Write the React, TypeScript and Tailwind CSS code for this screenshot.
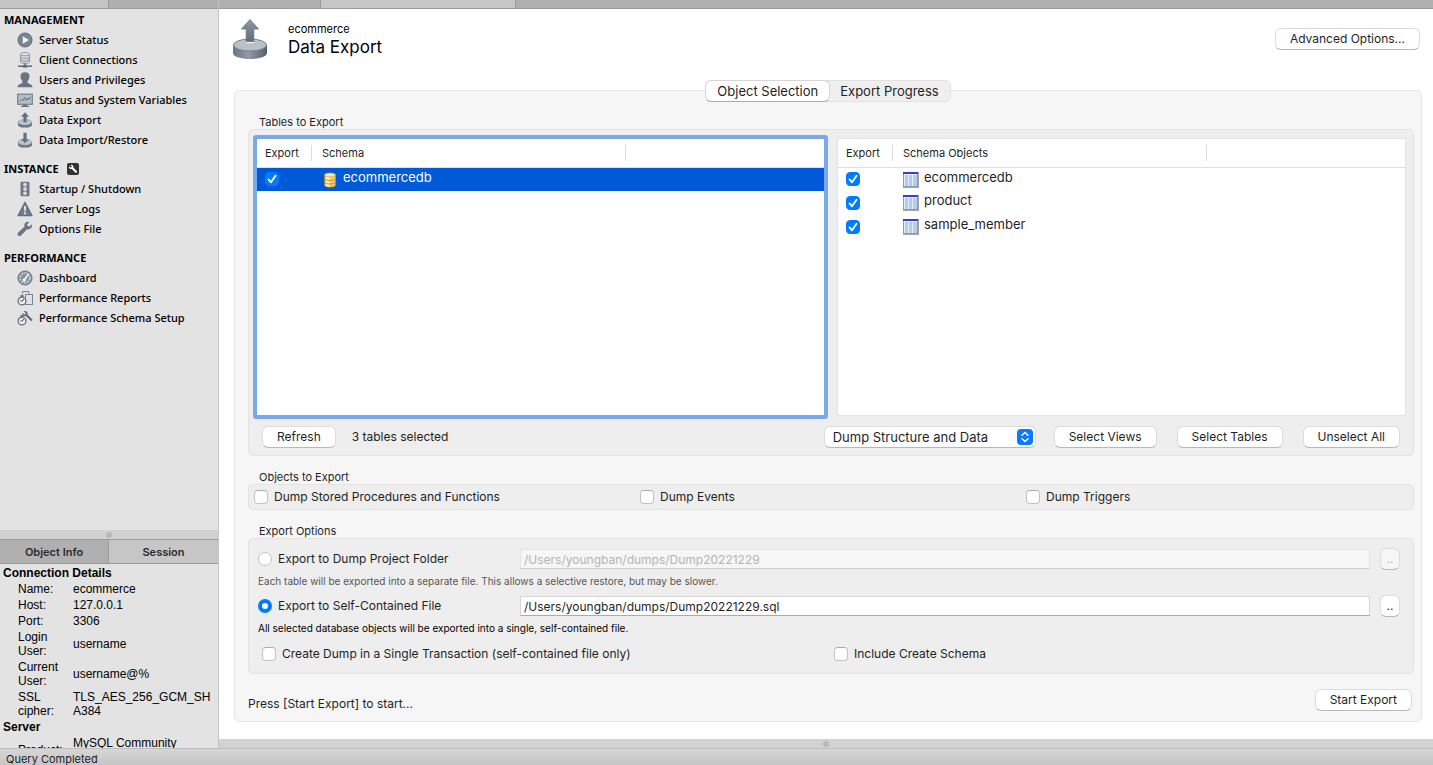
import type { ReactNode } from "react";

const Icon = ({ children }: { children: ReactNode }) => (
  <svg width="16" height="16" viewBox="0 0 16 16" className="shrink-0">
    {children}
  </svg>
);

const Disk = ({ up }: { up: boolean }) => (
  <Icon>
    <path d="M1 10.300v2.400c0 1.700 3.100 2.900 7 2.900s7-1.200 7-2.900v-2.400z" fill="#66707e" />
    <ellipse cx="8" cy="10.300" rx="6.800" ry="2.900" fill="#bcc4cd" stroke="#8c95a2" strokeWidth=".6" />
    {up ? (
      <path d="M8 .3l4 4.400H9.600v5.600H6.400V4.700H4z" fill="#647080" />
    ) : (
      <path d="M8 11.200L4 7h2.400V.8h3.200V7H12z" fill="#647080" />
    )}
  </Icon>
);

const wrench =
  "M14.800 3.200l-2.300 2.300-1.900-.4-.5-1.900L12.400.9C10.700.3 8.800.8 7.900 2.300c-.7 1.100-.7 2.300-.3 3.300L1.200 11.600c-.9.900-.9 2.100-.1 2.900s2.100.8 2.900-.1L10.100 8.200c1.100.4 2.500.2 3.500-.6 1.400-1.100 1.800-2.900 1.200-4.400z";

const Stopwatch = () => (
  <>
    <rect x="3.500" y="5" width="3" height="2" fill="#66707e" />
    <circle cx="5" cy="11" r="3.900" fill="#eef1f4" stroke="#66707e" strokeWidth="1.300" />
    <path d="M5 11l2-2M5 11H3" stroke="#66707e" strokeWidth="1.200" />
  </>
);

const management = [
  {
    label: "Server Status",
    icon: (
      <Icon>
        <circle cx="8" cy="8" r="7" fill="#7a8593" stroke="#5f6a78" />
        <path d="M5.800 4.200v7.600L12 8z" fill="#f1f3f5" />
      </Icon>
    ),
  },
  {
    label: "Client Connections",
    icon: (
      <Icon>
        <path d="M3.500 2.200v7.600c0 .9 2 1.600 4.500 1.600s4.500-.7 4.500-1.600V2.200z" fill="#d3d9e0" stroke="#8d96a3" />
        <ellipse cx="8" cy="2.200" rx="4.500" ry="1.600" fill="#e9ecef" stroke="#8d96a3" />
        <path d="M3.500 5c0 .9 2 1.500 4.500 1.500S12.500 5.900 12.500 5M3.500 7.600c0 .9 2 1.500 4.500 1.500s4.500-.6 4.500-1.500" fill="none" stroke="#8d96a3" />
        <path d="M8 11.500V14M1 14.200h14" stroke="#5f6a78" strokeWidth="1.500" />
        <rect x="6" y="13" width="4" height="2.600" fill="#5f6a78" />
      </Icon>
    ),
  },
  {
    label: "Users and Privileges",
    icon: (
      <Icon>
        <path d="M8 .3c3 0 4.500 1.500 4.500 4 0 2-.8 3.600-1.900 4.800-.3 1.400.2 2.200 1.600 2.600 1.800.5 3.300 1.300 3.300 3.600H.5c0-2.300 1.500-3.100 3.300-3.600 1.400-.4 1.900-1.200 1.600-2.600C4.300 7.900 3.500 6.300 3.500 4.300c0-2.500 1.500-4 4.500-4z" fill="#687482" />
      </Icon>
    ),
  },
  {
    label: "Status and System Variables",
    icon: (
      <Icon>
        <rect x=".7" y="2.200" width="14.600" height="10.100" fill="#b5bfca" stroke="#7b8593" strokeWidth="1.300" />
        <path d="M2.500 9.500l2-2 1.300 1.300L7.500 5.500l1.500 3 1.500-2.500 1 2L13.500 5" fill="none" stroke="#66717f" />
        <path d="M6 12.500h4v1.200h2V15H4v-1.300h2z" fill="#687382" />
      </Icon>
    ),
  },
  { label: "Data Export", icon: <Disk up={true} /> },
  { label: "Data Import/Restore", icon: <Disk up={false} /> },
];

const instance = [
  {
    label: "Startup / Shutdown",
    icon: (
      <Icon>
        <rect x="3.500" y=".8" width="9" height="14.400" rx="1" fill="#6f7a88" />
        <circle cx="8" cy="3.700" r="1.900" fill="#d5dae0" />
        <circle cx="8" cy="8" r="1.900" fill="#d5dae0" />
        <circle cx="8" cy="12.300" r="1.900" fill="#d5dae0" />
      </Icon>
    ),
  },
  {
    label: "Server Logs",
    icon: (
      <Icon>
        <path d="M8 1.200L15 14.600H1z" fill="#6f7a88" stroke="#66707e" strokeWidth="1.200" strokeLinejoin="round" />
        <path d="M7 5.200h2L8.600 10.500H7.400zM7.100 11.500h1.800v1.800H7.100z" fill="#f4f5f6" />
      </Icon>
    ),
  },
  {
    label: "Options File",
    icon: (
      <Icon>
        <path d={wrench} fill="#6a7584" />
      </Icon>
    ),
  },
];

const performance = [
  {
    label: "Dashboard",
    icon: (
      <Icon>
        <circle cx="8" cy="8" r="7" fill="#8791a0" stroke="#66707e" />
        <circle cx="8" cy="8" r="5" fill="none" stroke="#d3d8de" strokeWidth="1.500" strokeDasharray="2 1.200" />
        <path d="M7 10.500L11.500 4" stroke="#f4f5f6" strokeWidth="1.600" />
        <circle cx="7.300" cy="10" r="1.800" fill="#f4f5f6" />
      </Icon>
    ),
  },
  {
    label: "Performance Reports",
    icon: (
      <Icon>
        <path d="M5.500 4V1.500H12V4" fill="#dfe3e8" stroke="#7b8593" />
        <rect x="8.500" y="4.500" width="7" height="10" fill="#dfe3e8" stroke="#7b8593" />
        <Stopwatch />
      </Icon>
    ),
  },
  {
    label: "Performance Schema Setup",
    icon: (
      <Icon>
        <path d="M6.500 1.500c1-.8 2.500-.7 3.400.2.800.8 1 1.900.6 2.900l4.500 4.300c.6.600.5 1.300 0 1.700-.5.500-1.200.4-1.700-.1L9 6.100c-1 .4-2.100.1-2.900-.6-.7-.7-1-1.700-.7-2.700L7.200 4.500l1.300-.3.200-1.200z" fill="#5f6a78" />
        <Stopwatch />
      </Icon>
    ),
  },
];

type Item = { label: string; icon: ReactNode };

const NavGroup = ({ title, items, badge }: { title: string; items: Item[]; badge?: ReactNode }) => (
  <section className="mb-[9px]">
    <h2 className="flex h-5 items-center gap-2 pl-1 text-[11px] font-bold">
      {title}
      {badge}
    </h2>
    <ul>
      {items.map((item) => (
        <li key={item.label}>
          <a href="#" className="flex h-5 items-center gap-[6px] pl-[17px] text-[11px] font-medium">
            {item.icon}
            {item.label}
          </a>
        </li>
      ))}
    </ul>
  </section>
);

const details = [
  ["Name:", "ecommerce"],
  ["Host:", "127.0.0.1"],
  ["Port:", "3306"],
  ["Login User:", "username"],
  ["Current User:", "username@%"],
  ["SSL cipher:", "TLS_AES_256_GCM_SHA384"],
];

const Sidebar = () => (
  <aside className="flex w-[219px] shrink-0 flex-col border-r border-[#c4c4c4] bg-[#e3e3e3] text-black">
    <div className="flex h-[9px] shrink-0 border-b border-[#9b9b9b]">
      <div className="w-1/2 border-r border-[#9b9b9b] bg-[#c5c5c5]" />
      <div className="w-1/2 bg-[#afafaf]" />
    </div>
    <nav className="min-h-0 flex-1 overflow-hidden pt-px font-['Noto_Sans',sans-serif]">
      <NavGroup title="MANAGEMENT" items={management} />
      <NavGroup
        title="INSTANCE"
        items={instance}
        badge={
          <svg width="12" height="12" viewBox="0 0 12 12">
            <rect width="12" height="12" rx="2" fill="#333" />
            <path d="M2 3.200L3.500 4.500l1-.2.200-1L3.500 2C5 1.300 6.800 2.500 6.300 4.500l3.500 3.600c.9 1-.5 2.300-1.500 1.400L4.800 6C3 6.500 1.500 5 2 3.200z" fill="#fff" />
          </svg>
        }
      />
      <NavGroup title="PERFORMANCE" items={performance} />
    </nav>
    <div className="flex h-[9px] shrink-0 items-center justify-center bg-[#d2d2d2]">
      <span className="size-[6px] rounded-full bg-[#b9b9b9]" />
    </div>
    <div className="flex h-[25px] shrink-0 border-y border-[#9b9b9b] font-['Inter',sans-serif] text-[11px] font-semibold text-[#2b2b2b]">
      <button className="w-1/2 border-r border-[#9b9b9b] bg-[#b0b0b0]">Object Info</button>
      <button className="w-1/2 bg-[#c6c6c6]">Session</button>
    </div>
    <div className="h-[184px] shrink-0 overflow-hidden font-['Liberation_Sans',Arial,sans-serif] text-[12px] leading-[14px]">
      <table className="w-full table-fixed border-separate border-spacing-x-0 border-spacing-y-[2px] text-left">
        <colgroup>
          <col className="w-[73px]" />
          <col />
        </colgroup>
        <tbody>
          <tr>
            <th colSpan={2} className="p-0 pl-[3px] font-bold">Connection Details</th>
          </tr>
          {details.map(([name, value]) => (
            <tr key={name}>
              <td className="p-0 pr-2 pl-[18px]">{name}</td>
              <td className="p-0 pr-1 break-all">{value}</td>
            </tr>
          ))}
          <tr>
            <th colSpan={2} className="p-0 pl-[3px] font-bold">Server</th>
          </tr>
          <tr className="h-7">
            <td className="p-0 pl-[18px]">Product:</td>
            <td className="p-0 align-top">MySQL Community</td>
          </tr>
        </tbody>
      </table>
    </div>
  </aside>
);

const buttonClass =
  "flex h-[22px] items-center justify-center rounded-md border border-[#dcdcdc] border-b-[#b8b8b8] bg-white";

const checkClass =
  "size-[14px] shrink-0 appearance-none rounded-[4px] border border-[#c2c2c2] border-t-[#acacac] bg-white";

const Checked = ({ label }: { label: string }) => (
  <span className="relative block size-[14px]">
    <input
      type="checkbox"
      defaultChecked
      aria-label={label}
      className="peer block size-[14px] appearance-none rounded-[4px] border border-[#c2c2c2] bg-white checked:border-[#007aff] checked:bg-[#007aff]"
    />
    <svg viewBox="0 0 14 14" className="pointer-events-none absolute inset-0 hidden size-[14px] peer-checked:block">
      <path d="M3.500 7.400l2.500 2.900L10.500 3.800" fill="none" stroke="#fff" strokeWidth="1.900" strokeLinecap="round" strokeLinejoin="round" />
    </svg>
  </span>
);

const Check = ({ label }: { label: string }) => (
  <label className="flex items-center gap-[6px]">
    <input type="checkbox" className={checkClass} />
    {label}
  </label>
);

const SchemaIcon = () => (
  <svg width="16" height="16" viewBox="0 0 16 16">
    <path d="M2.500 3v10.200c0 1.200 2.300 2 5.500 2s5.500-.8 5.500-2V3z" fill="#f3cd6b" stroke="#b98a2c" strokeWidth=".7" />
    <path d="M4 4v10c1 .5 2 .7 3.500.8V5z" fill="#fff2bd" />
    <ellipse cx="8" cy="2.900" rx="5.500" ry="2" fill="#fbe9a8" stroke="#c99a3b" strokeWidth=".6" />
    <path d="M2.500 6.500c0 1.100 2.300 2 5.500 2s5.500-.9 5.500-2M2.500 10c0 1.100 2.300 2 5.500 2s5.500-.9 5.500-2" fill="none" stroke="#b98a2c" strokeWidth=".9" />
  </svg>
);

const TableIcon = () => (
  <svg width="16" height="16" viewBox="0 0 16 16">
    <rect width="16" height="16" fill="#a3a5a8" />
    <rect width="15" height="15" fill="#7f9fcb" />
    <rect x="1" y="2" width="13" height="12" fill="#e6f0fb" />
    <rect width="15" height="2" fill="#3a3fc8" />
    <path d="M2 3h3v11H2zM6 3h3v11H6zM10 3h4v11h-4z" fill="#b4cdee" />
  </svg>
);

type ListProps = { column: string; rows: string[]; selected?: boolean; icon: ReactNode };

const ObjectList = ({ column, rows, selected, icon }: ListProps) => (
  <div
    className={
      selected
        ? "h-[284px] min-w-0 flex-1 rounded-[3px] border-4 border-[#7aa7ee] bg-white"
        : "my-[3px] mr-[3px] h-[278px] min-w-0 flex-1 border border-[#e2e2e2] bg-white"
    }
  >
    <table className="w-full table-fixed border-collapse text-left">
      <colgroup>
        <col className="w-[54px]" />
        <col className="w-[315px]" />
        <col />
      </colgroup>
      <thead>
        <tr className="h-7 border-b border-[#dedede] text-[11px]">
          <th className="p-0 pl-2 font-normal">Export</th>
          <th className="p-0 font-normal">
            <div className="flex h-4 items-center border-x border-[#dcdcdc] pl-[10px]">{column}</div>
          </th>
          <th />
        </tr>
      </thead>
      <tbody>
        {rows.map((row) => (
          <tr key={row} className={selected ? "h-6 bg-[#0059d6] text-white" : "h-6"}>
            <td className="p-0 pl-2">
              <Checked label={row} />
            </td>
            <td colSpan={2} className="p-0 align-top">
              <div className="flex gap-[5px] pl-[11px] text-[13px]">
                <span className="h-5 pt-1">{icon}</span>
                <span className="leading-[18px]">{row}</span>
              </div>
            </td>
          </tr>
        ))}
      </tbody>
    </table>
  </div>
);

const Group = ({ title, children }: { title: string; children: ReactNode }) => (
  <fieldset className="block min-w-0">
    <legend className="h-[14px] pl-[11px] text-[11px] leading-[14px]">{title}</legend>
    <div className="rounded-[5px] border border-[#e3e3e3] bg-[#eeeeee]">{children}</div>
  </fieldset>
);

const Path = ({ value, disabled }: { value: string; disabled?: boolean }) => (
  <>
    <input
      type="text"
      aria-label="Export path"
      defaultValue={value}
      disabled={disabled}
      className="h-5 min-w-0 flex-1 border border-[#d6d6d6] border-b-[#ababab] bg-white px-[3px] disabled:border-[#e4e4e4] disabled:border-b-[#cfcfcf] disabled:bg-[#f6f6f6] disabled:text-[#b4b4b4]"
    />
    <button
      disabled={disabled}
      aria-label="Browse"
      className={`${buttonClass} ml-[10px] w-5 disabled:bg-[#f6f6f6] disabled:text-[#b4b4b4]`}
    >
      ..
    </button>
  </>
);

const radioClass =
  "size-[14px] shrink-0 appearance-none rounded-full border border-[#c2c2c2] bg-white checked:border-[4px] checked:border-[#007aff]";

const Main = () => (
  <main className="flex min-w-0 flex-1 flex-col bg-white">
    <div className="flex h-[9px] shrink-0 border-b border-[#9b9b9b] bg-[#b0b0b0]">
      <div className="w-[102px] border-r border-[#9b9b9b]" />
      <div className="w-[195px] border-r border-[#9b9b9b] bg-[#c6c6c6]" />
    </div>
    <header className="flex h-[71px] shrink-0 px-[13px] pt-[9px]">
      <svg width="36" height="42" viewBox="0 0 36 42" className="shrink-0">
        <defs>
          <linearGradient id="side" x1="0" x2="1">
            <stop offset="0" stopColor="#6d7580" />
            <stop offset=".45" stopColor="#9199a4" />
            <stop offset="1" stopColor="#555f6c" />
          </linearGradient>
          <linearGradient id="arrow" x1="0" y1="0" x2="0" y2="1">
            <stop offset="0" stopColor="#8f98a4" />
            <stop offset="1" stopColor="#606b79" />
          </linearGradient>
        </defs>
        <path d="M1 27v8c0 3.500 7.600 6 17 6s17-2.500 17-6v-8z" fill="url(#side)" />
        <ellipse cx="18" cy="27" rx="16.500" ry="6" fill="#b9c0ca" stroke="#77818e" />
        <path d="M14 24.500h8" stroke="#eef0f3" strokeWidth="1.500" />
        <path d="M18 1.500l8.500 9.500h-4.700v12.500h-7.600V11H9.500z" fill="url(#arrow)" stroke="#66717f" strokeWidth=".8" />
      </svg>
      <div className="ml-5 flex-1 pt-1 text-black">
        <p className="text-[11px] leading-[14px]">ecommerce</p>
        <h1 className="text-[17px] leading-[22px]">Data Export</h1>
      </div>
      <button className={`${buttonClass} mt-[10px] px-[14px]`}>Advanced Options...</button>
    </header>

    <div className="mr-[11px] ml-[15px] flex min-h-0 flex-1 flex-col">
      <div className="relative z-10 mx-auto flex h-[22px] rounded-md border border-[#e2e2e2] bg-[#efefef] text-[13px]">
        <button className="-m-px rounded-md border border-[#d6d6d6] border-b-[#ababab] bg-white px-[11px]">
          Object Selection
        </button>
        <button className="px-[11px]">Export Progress</button>
      </div>
      <div className="-mt-3 rounded-[5px] border border-[#e6e6e6] bg-[#f6f6f6] pr-[7px] pb-[9px] pl-[13px]">
        <div className="flex flex-col gap-[14px] pt-6">
          <Group title="Tables to Export">
            <div className="flex gap-[9px] px-1 pt-[5px]">
              <ObjectList column="Schema" rows={["ecommercedb"]} selected icon={<SchemaIcon />} />
              <ObjectList
                column="Schema Objects"
                rows={["ecommercedb", "product", "sample_member"]}
                icon={<TableIcon />}
              />
            </div>
            <div className="flex items-center px-[13px] py-[7px]">
              <button className={`${buttonClass} px-[14px]`}>Refresh</button>
              <span className="ml-4 flex-1">3 tables selected</span>
              <div className="relative">
                <select
                  aria-label="Dump contents"
                  className={`${buttonClass} w-[212px] appearance-none pl-2 text-[13px]`}
                >
                  <option>Dump Structure and Data</option>
                </select>
                <svg width="16" height="16" viewBox="0 0 16 16" className="pointer-events-none absolute top-[3px] right-[3px]">
                  <rect width="16" height="16" rx="4" fill="#0a7aff" />
                  <path d="M5 6.300L8 3.500l3 2.800M5 9.700l3 2.800 3-2.800" fill="none" stroke="#fff" strokeWidth="1.500" strokeLinecap="round" strokeLinejoin="round" />
                </svg>
              </div>
              <div className="ml-[18px] flex gap-5">
                <button className={`${buttonClass} px-[14px]`}>Select Views</button>
                <button className={`${buttonClass} px-[14px]`}>Select Tables</button>
                <button className={`${buttonClass} px-[14px]`}>Unselect All</button>
              </div>
            </div>
          </Group>

          <Group title="Objects to Export">
            <div className="grid h-6 grid-cols-3 items-center pr-px pl-[5px]">
              <Check label="Dump Stored Procedures and Functions" />
              <Check label="Dump Events" />
              <Check label="Dump Triggers" />
            </div>
          </Group>

          <Group title="Export Options">
            <div className="pt-[9px] pr-[13px] pb-[7px] pl-[9px]">
              <div className="flex items-center">
                <label className="flex w-[262px] shrink-0 items-center gap-[6px]">
                  <input type="radio" name="target" className={radioClass} />
                  Export to Dump Project Folder
                </label>
                <Path value="/Users/youngban/dumps/Dump20221229" disabled />
              </div>
              <p className="h-[25px] pt-[3px] text-[10px] text-[#555]">
                Each table will be exported into a separate file. This allows a selective restore, but may be slower.
              </p>
              <div className="flex items-center">
                <label className="flex w-[262px] shrink-0 items-center gap-[6px]">
                  <input type="radio" name="target" defaultChecked className={radioClass} />
                  Export to Self-Contained File
                </label>
                <Path value="/Users/youngban/dumps/Dump20221229.sql" />
              </div>
              <p className="h-[25px] pt-[3px] text-[10px] text-black">
                All selected database objects will be exported into a single, self-contained file.
              </p>
              <div className="grid h-6 grid-cols-2 items-center gap-x-[6px] pl-1">
                <Check label="Create Dump in a Single Transaction (self-contained file only)" />
                <Check label="Include Create Schema" />
              </div>
            </div>
          </Group>
        </div>
        <div className="flex items-center justify-between pt-[14px] pr-[2px]">
          <span className="pt-2">Press [Start Export] to start...</span>
          <button className={`${buttonClass} px-[14px]`}>Start Export</button>
        </div>
      </div>
    </div>
    <div className="flex h-[9px] shrink-0 items-center justify-center bg-[#d2d2d2]">
      <span className="size-[6px] rounded-full bg-[#b9b9b9]" />
    </div>
  </main>
);

const App = () => (
  <div className="flex h-screen flex-col overflow-hidden font-['Inter',sans-serif] text-[12px] leading-4 text-[#1f1f1f]">
    <div className="flex min-h-0 flex-1">
      <Sidebar />
      <Main />
    </div>
    <footer className="flex h-[17px] shrink-0 items-end border-t border-[#bdbdbd] bg-linear-to-b from-[#d6d6d6] to-[#c6c6c6] pl-[6px] text-[11px] leading-[12px]">
      Query Completed
    </footer>
  </div>
);

export default App;
